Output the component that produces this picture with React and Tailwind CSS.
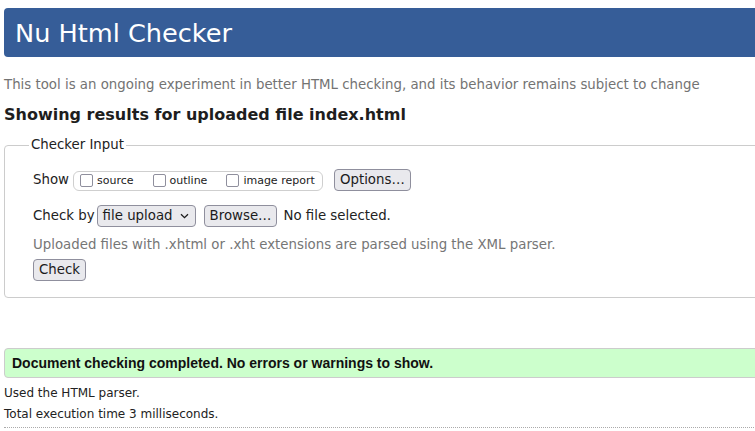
import React from 'react';

const Btn = ({ children, className = '' }) => (
    <button className={`h-[22px] px-[5px] rounded-[4px] border border-[#8f8f9d] bg-[#e9e9ed] text-[13.33px] leading-[20px] text-[#1b1b1b] ${className}`}>
        {children}
    </button>
);

const Box = ({ label, className = '' }) => (
    <label className={`flex items-center gap-[4px] ${className}`}>
        <span className="w-[13px] h-[13px] rounded-[2px] border border-[#8f8f9d] bg-white" />
        <span className="text-[11px] leading-[14px] mt-[1px]">{label}</span>
    </label>
);

export default function App() {
    return (
        <div className="w-[755px] h-[431px] overflow-hidden bg-white font-['DejaVu_Sans',sans-serif] text-[#222]">
            <div className="w-[790px] pl-[4px]">
                <header className="mt-[8px] h-[49px] rounded-[4px] bg-[#365d98] pl-[11px] flex items-center">
                    <h1 className="text-[25.6px] leading-[30px] text-white">Nu Html Checker</h1>
                </header>

                <p className="mt-[18px] text-[13.33px] leading-[20px] text-[#737373]">
                    This tool is an ongoing experiment in better HTML checking, and its behavior remains subject to change
                </p>
                <h2 className="mt-[8px] text-[16px] leading-[24px] font-bold text-[#1e1e1e]">
                    Showing results for uploaded file index.html
                </h2>

                <fieldset className="mt-[8px] border border-[#cccccc] rounded-[4px] px-[28px] pt-[14px] pb-[16px] text-[13.33px]">
                    <legend className="ml-[-4px] px-[2px] leading-[20px]">Checker Input</legend>

                    <div className="flex items-center h-[22px]">
                        <span>Show</span>
                        <div className="ml-[4px] w-[250px] h-[20px] rounded-[6px] border border-[#cfcfcf] flex items-center pl-[6px] mt-[1px]">
                            <Box label="source" />
                            <Box label="outline" className="ml-[19px]" />
                            <Box label="image report" className="ml-[19px]" />
                        </div>
                        <Btn className="ml-[11px]">Options…</Btn>
                    </div>

                    <div className="mt-[14px] flex items-center h-[22px]">
                        <span>Check by</span>
                        <div className="ml-[2px] w-[99px] h-[22px] rounded-[4px] border border-[#8f8f9d] bg-[#e9e9ed] flex items-center pl-[5px] pr-[6px] justify-between">
                            <span className="leading-[20px] text-[#1b1b1b]">file upload</span>
                            <svg width="9" height="6" viewBox="0 0 9 6" className="text-[#1b1b1b]">
                                <path d="M1 1.2 4.5 4.6 8 1.2" fill="none" stroke="currentColor" strokeWidth="1.3" />
                            </svg>
                        </div>
                        <Btn className="ml-[8px]">Browse…</Btn>
                        <span className="ml-[6px]">No file selected.</span>
                    </div>

                    <p className="mt-[8px] leading-[20px] text-[#767676]">
                        Uploaded files with .xhtml or .xht extensions are parsed using the XML parser.
                    </p>
                    <Btn className="mt-[4px]">Check</Btn>
                </fieldset>

                <div className="mt-[50px] h-[30px] rounded-l-[4px] border border-[#cccccc] bg-[#ccffcc] pl-[7px] flex items-center">
                    <p className="font-['Liberation_Sans',sans-serif] font-bold text-[14px] text-[#111]">
                        Document checking completed. No errors or warnings to show.
                    </p>
                </div>

                <p className="mt-[5px] text-[12px] leading-[21px]">Used the HTML parser.</p>
                <p className="text-[12px] leading-[21px]">Total execution time 3 milliseconds.</p>
                <div className="mt-[2px] border-t border-dotted border-[#aaaaaa]" />
            </div>
        </div>
    );
}
